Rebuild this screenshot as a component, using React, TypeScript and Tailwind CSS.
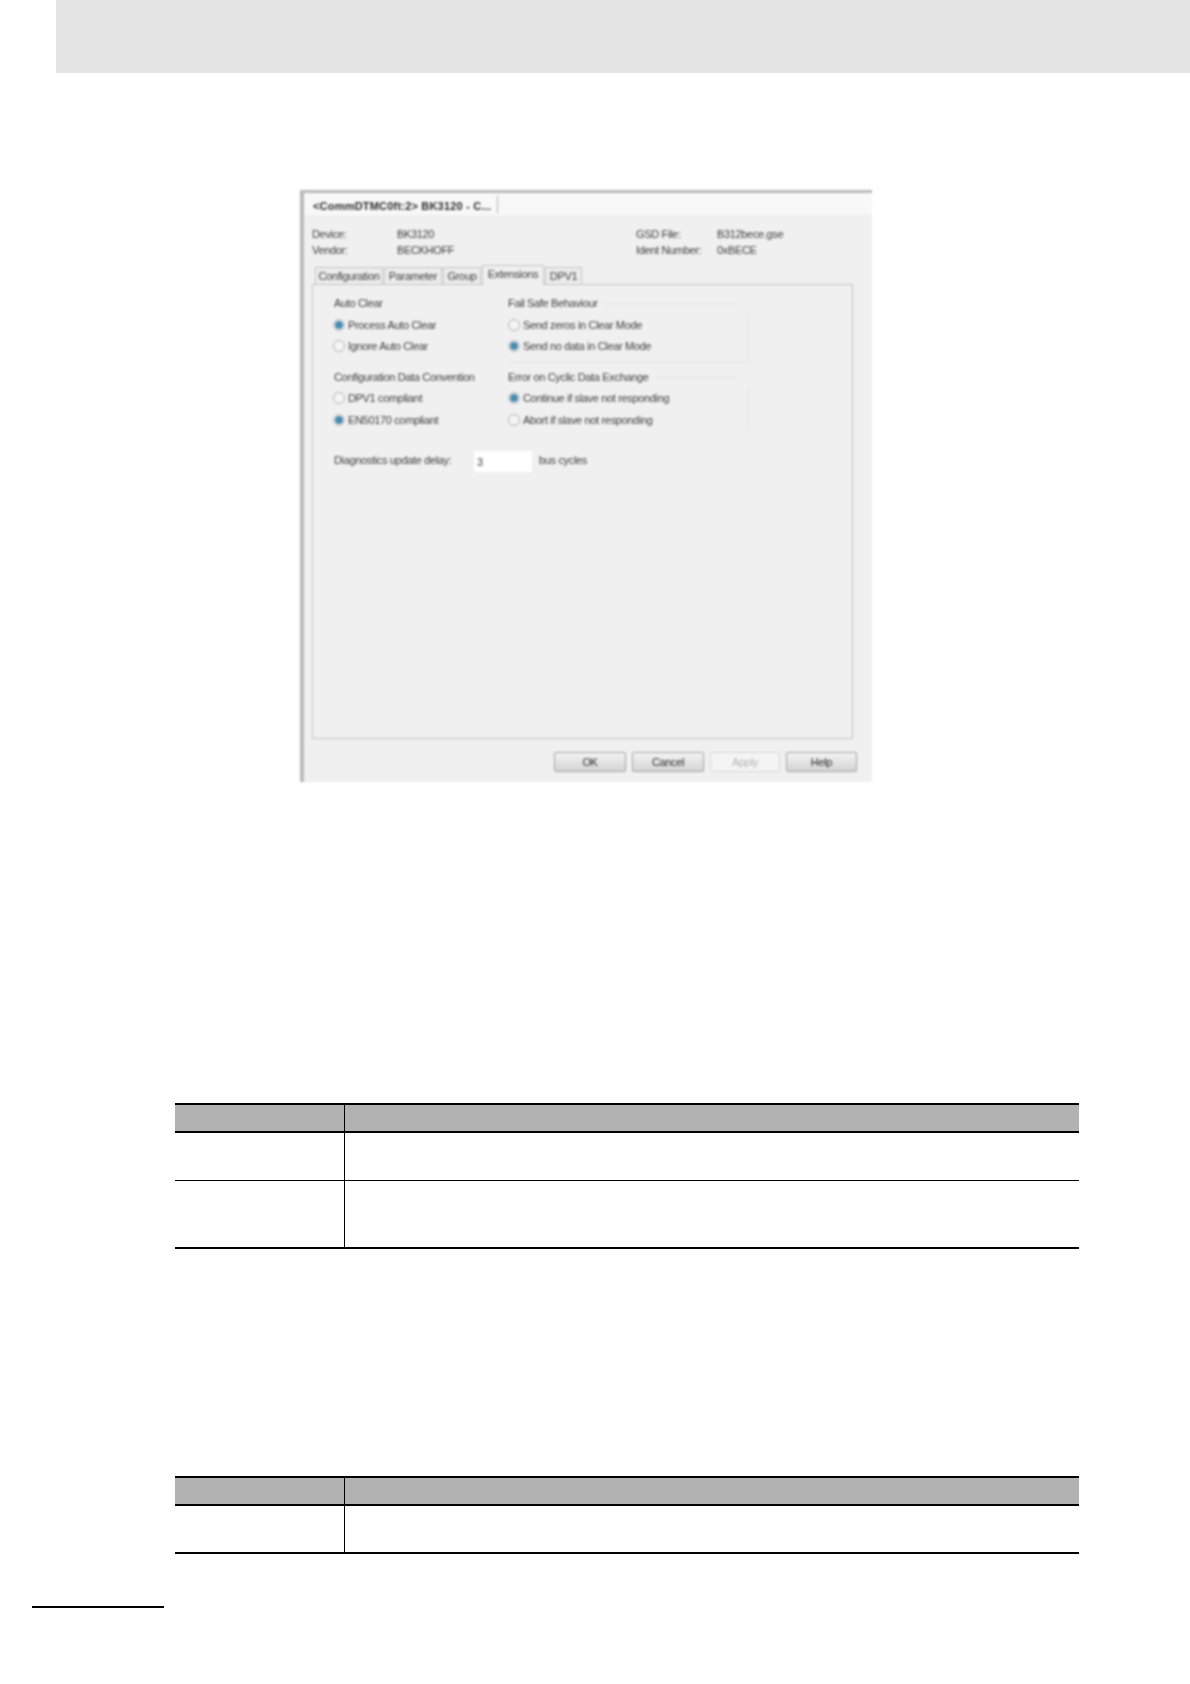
const tabs = [
  { label: 'Configuration', width: 'w-[68px]' },
  { label: 'Parameter', width: 'w-[58px]' },
  { label: 'Group', width: 'w-[38px]' },
  { label: 'Extensions', width: 'w-[62px]', active: true },
  { label: 'DPV1', width: 'w-[37px]' },
];

function Radio({ label, checked = false }: { label: string; checked?: boolean }) {
  return (
    <div className="flex items-center h-5 -ml-[1px]">
      <span className="w-[12px] h-[12px] mr-[3px] rounded-full border border-[#b4b4b4] bg-[#f4f4f4] flex items-center justify-center shrink-0">
        {checked && <span className="w-[8px] h-[8px] rounded-full bg-[#4a8cb2]" />}
      </span>
      <span className="whitespace-nowrap">{label}</span>
    </div>
  );
}

function Group({ title, bottom = false, bodyClass, children }: { title: string; bottom?: boolean; bodyClass: string; children: React.ReactNode }) {
  return (
    <div>
      <div className="flex items-center h-5">
        <span className="whitespace-nowrap pr-[6px]">{title}</span>
        <span className="flex-1 h-px mr-[11px] bg-[#e4e4e4]" />
      </div>
      <div className={`border-r border-[#e4e4e4] pl-px ${bottom ? 'border-b' : ''} ${bodyClass}`}>{children}</div>
    </div>
  );
}

function DialogButton({ label, width, disabled = false }: { label: string; width: string; disabled?: boolean }) {
  return (
    <div
      className={`${width} h-5 flex items-center justify-center rounded-[2px] border ${
        disabled
          ? 'border-[#d8d8d8] bg-[#f4f4f4] text-[#b4b4b4]'
          : 'border-[#a4a4a4] bg-gradient-to-b from-[#f3f3f3] to-[#d4d4d4] text-[#2c2c2c]'
      }`}
    >
      {label}
    </div>
  );
}

function Dialog() {
  return (
    <div className="ml-[300px] mt-[117px] w-[572px] h-[592px] border-l-[4px] border-t-[3px] border-[#bababa] bg-[#f0f0f0] text-[11px] leading-4 tracking-[-0.34px] text-[#3c3c3c] blur-[0.8px]">
      <div className="h-[22px] bg-[#f8f8f8] flex items-center pl-[9px]">
        <span className="font-bold text-[#2c2c2c] whitespace-nowrap tracking-[0.2px] pt-[3px]">{'<CommDTMC0ft:2> BK3120 - C...'}</span>
        <span className="ml-[6px] w-px h-[17px] bg-[#b4b4b4]" />
      </div>

      <div className="pl-[8px]">
        <div className="pt-[11px] grid grid-cols-[85px_239px_81px_1fr]">
          <span>Device:</span>
          <span>BK3120</span>
          <span>GSD File:</span>
          <span>B312bece.gse</span>
          <span>Vendor:</span>
          <span>BECKHOFF</span>
          <span>Ident Number:</span>
          <span>0xBECE</span>
        </div>

        <div className="mt-[7px] ml-[3px] flex items-end gap-[1px] h-5 relative z-10">
          {tabs.map((tab) => (
            <div
              key={tab.label}
              className={`${tab.width} flex items-center justify-center border border-[#c4c4c4] ${
                tab.active ? 'h-5 bg-[#f0f0f0] border-b-0 pb-[3px]' : 'h-[18px] bg-[#ececec]'
              }`}
            >
              {tab.label}
            </div>
          ))}
        </div>

        <div className="-mt-px w-[541px] h-[455px] border border-[#c4c4c4] pl-[21px] pt-[8px]">
          <div className="flex">
            <div className="w-[174px]">
              <div className="h-5 leading-5">Auto Clear</div>
              <div className="mt-[2px]"><Radio label="Process Auto Clear" checked /></div>
              <div className="mt-px"><Radio label="Ignore Auto Clear" /></div>
              <div className="h-5 leading-5 mt-[11px]">Configuration Data Convention</div>
              <div className="mt-px"><Radio label="DPV1 compliant" /></div>
              <div className="mt-[2px]"><Radio label="EN50170 compliant" checked /></div>
            </div>
            <div className="w-[241px]">
              <Group title="Fail Safe Behaviour" bottom bodyClass="pt-[2px] pb-[6px]">
                <Radio label="Send zeros in Clear Mode" />
                <div className="mt-px"><Radio label="Send no data in Clear Mode" checked /></div>
              </Group>
              <div className="mt-[4px]">
                <Group title="Error on Cyclic Data Exchange" bodyClass="pt-[1px] pb-[2px]">
                  <Radio label="Continue if slave not responding" checked />
                  <div className="mt-[2px]"><Radio label="Abort if slave not responding" /></div>
                </Group>
              </div>
            </div>
          </div>

          <div className="mt-[19px] flex items-center">
            <span className="w-[140px] -mt-[3px]">Diagnostics update delay:</span>
            <span className="w-[58px] h-[21px] bg-white flex items-center pl-[3px]">3</span>
            <span className="ml-[7px] -mt-[3px]">bus cycles</span>
          </div>
        </div>

        <div className="mt-[13px] ml-[242px] flex gap-[6px]">
          <DialogButton label="OK" width="w-[72px]" />
          <DialogButton label="Cancel" width="w-[72px]" />
          <DialogButton label="Apply" width="w-[70px]" disabled />
          <DialogButton label="Help" width="w-[71px]" />
        </div>
      </div>
    </div>
  );
}

function ParamTable({ rows, className }: { rows: string[]; className: string }) {
  return (
    <div className={`ml-[175px] w-[904px] border-t-2 border-b-2 border-black ${className}`}>
      <div className="grid grid-cols-[170px_1fr] h-[26px] bg-[#b2b2b2] border-b-2 border-black box-content">
        <div className="border-r border-black" />
        <div />
      </div>
      {rows.map((height, i) => (
        <div key={i} className={`grid grid-cols-[170px_1fr] ${height} ${i > 0 ? 'border-t border-black box-content' : ''}`}>
          <div className="border-r border-black" />
          <div />
        </div>
      ))}
    </div>
  );
}

export default function App() {
  return (
    <div className="w-[1190px] h-[1684px] bg-white overflow-hidden font-['Liberation_Sans',Arial,sans-serif]">
      <div className="ml-[56px] h-[73px] bg-[#e5e5e5]" />
      <Dialog />
      <ParamTable className="mt-[321px]" rows={['h-[47px]', 'h-[66px]']} />
      <ParamTable className="mt-[227px]" rows={['h-[46px]']} />
      <div className="mt-[52px] ml-[32px] w-[132px] h-[2px] bg-black" />
    </div>
  );
}
